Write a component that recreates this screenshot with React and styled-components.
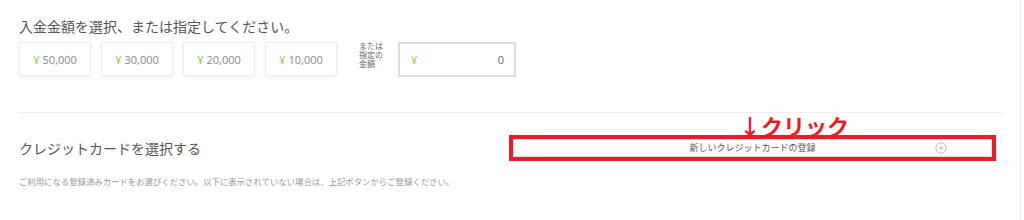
import React from "react";
import styled, { createGlobalStyle } from "styled-components";

const Global = createGlobalStyle`
  html, body { margin: 0; padding: 0; background: #fff; }
  body { font-family: "Open Sans", "Noto Sans CJK JP", sans-serif; color: #555; }
`;

const Page = styled.div`
  width: 1021px;
  height: 220px;
  border-right: 1px solid #ececec;
  box-sizing: border-box;
`;

const Section = styled.section`
  padding: 16px 0 0 19px;
`;

const Heading = styled.h2`
  margin: 0 0 6px;
  font-family: "Noto Sans CJK JP", sans-serif;
  font-weight: 400;
  font-size: 14px;
  line-height: 20px;
  color: #555;
`;

const AmountRow = styled.div`
  display: flex;
  align-items: flex-start;
  gap: 10px;
`;

const AmountButton = styled.button`
  width: 72px;
  height: 34px;
  padding: 0;
  background: #fff;
  border: 1px solid #eee;
  box-shadow: 0 1px 4px rgba(0, 0, 0, 0.07);
  font-family: "Open Sans", sans-serif;
  font-size: 11px;
  color: #888;
  cursor: pointer;
`;

const Yen = styled.span`
  color: #8cc63e;
  margin-right: 3px;
`;

const CustomLabel = styled.div`
  margin: -1px 2px 0 12px;
  width: 27px;
  font-family: "Noto Sans CJK JP", sans-serif;
  font-size: 8px;
  line-height: 9px;
  color: #666;
  white-space: nowrap;
`;

const CustomInput = styled.div`
  width: 118px;
  height: 35px;
  box-sizing: border-box;
  border: 2px solid #ddd;
  display: flex;
  align-items: center;
  justify-content: space-between;
  padding: 0 10px 0 11px;
  font-family: "Open Sans", sans-serif;
  font-size: 11px;
  color: #666;
`;

const Divider = styled.hr`
  margin: 35px 0 0 18px;
  width: 985px;
  border: 0;
  border-top: 1px solid #eee;
  height: 0;
`;

const CardRow = styled.div`
  display: flex;
  align-items: center;
  justify-content: space-between;
  margin: 22px 0 0 19px;
  width: 977px;
`;

const CardTitle = styled.h3`
  margin: 0;
  font-family: "Noto Sans CJK JP", sans-serif;
  font-weight: 400;
  font-size: 14px;
  line-height: 20px;
  color: #555;
`;

const Highlight = styled.div`
  position: relative;
  width: 487px;
  border: 4px solid #ec1c27;
  box-sizing: border-box;
`;

const Annotation = styled.div`
  position: absolute;
  bottom: 100%;
  left: 226px;
  margin-bottom: 1px;
  font-family: "Noto Sans CJK JP", sans-serif;
  font-weight: 700;
  font-size: 22px;
  line-height: 25px;
  color: #ec1c27;
  white-space: nowrap;
`;

const AddCardButton = styled.button`
  position: relative;
  display: block;
  width: 100%;
  height: 18px;
  padding: 0;
  background: #fff;
  border: 1px solid #ddd;
  font-family: "Noto Sans CJK JP", sans-serif;
  font-size: 9px;
  line-height: 16px;
  color: #555;
  cursor: pointer;
`;

const PlusIcon = styled.svg`
  position: absolute;
  right: 44px;
  top: 2px;
`;

const Note = styled.p`
  margin: 14px 0 0 19px;
  font-family: "Noto Sans CJK JP", sans-serif;
  font-size: 8.4px;
  line-height: 12px;
  color: #999;
`;

const amounts = ["50,000", "30,000", "20,000", "10,000"];

export default function App() {
  return (
    <>
      <Global />
      <Page>
        <Section>
          <Heading>入金金額を選択、または指定してください。</Heading>
          <AmountRow>
            {amounts.map((a) => (
              <AmountButton key={a}>
                <Yen>¥</Yen>
                {a}
              </AmountButton>
            ))}
            <CustomLabel>
              または
              <br />
              指定の
              <br />
              金額
            </CustomLabel>
            <CustomInput>
              <Yen>¥</Yen>
              <span>0</span>
            </CustomInput>
          </AmountRow>
        </Section>
        <Divider />
        <CardRow>
          <CardTitle>クレジットカードを選択する</CardTitle>
          <Highlight>
            <Annotation>↓クリック</Annotation>
            <AddCardButton>
              新しいクレジットカードの登録
              <PlusIcon width="12" height="12" viewBox="0 0 12 12">
                <circle cx="6" cy="6" r="5.2" fill="none" stroke="#bbb" strokeWidth="1" />
                <path d="M6 3.5v5M3.5 6h5" stroke="#bbb" strokeWidth="1" />
              </PlusIcon>
            </AddCardButton>
          </Highlight>
        </CardRow>
        <Note>
          ご利用になる登録済みカードをお選びください。以下に表示されていない場合は、上記ボタンからご登録ください。
        </Note>
      </Page>
    </>
  );
}
